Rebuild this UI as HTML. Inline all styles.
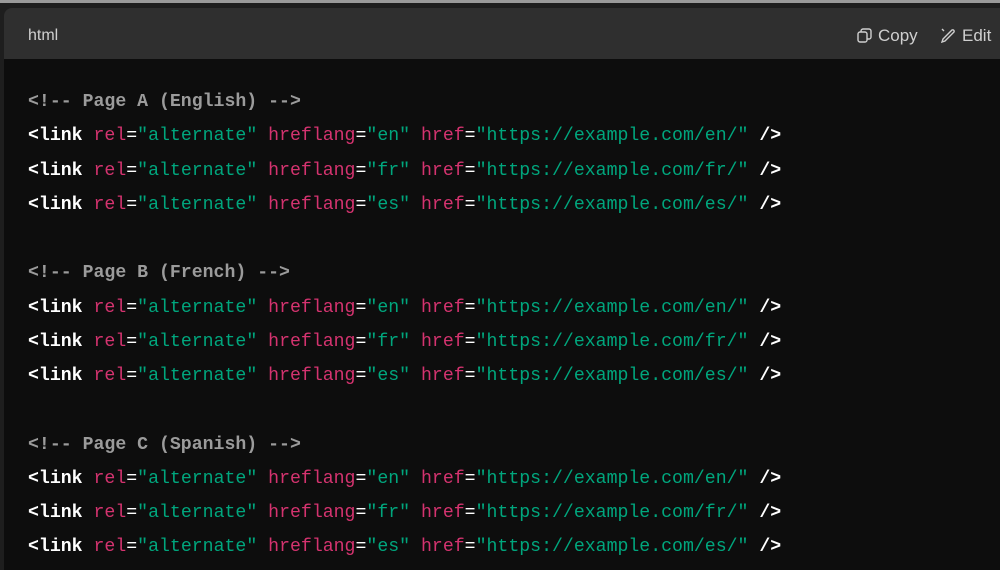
<!DOCTYPE html>
<html><head><meta charset="utf-8"><style>
html,body{margin:0;padding:0;width:1000px;height:570px;overflow:hidden;background:#1e1e1e;}
.top{position:absolute;left:0;top:0;width:1000px;height:3px;background:#9a9a9a;}
.hdr{position:absolute;left:4px;top:8px;width:996px;height:51px;background:#2f2f2f;border-radius:8px 0 0 0;}
.lang{position:absolute;left:24px;top:19px;font:16px "Liberation Sans",sans-serif;color:#cfcfcf;}
.btn{position:absolute;top:18px;font:17px "Liberation Sans",sans-serif;color:#cfcfcf;}
.code{position:absolute;left:4px;top:59px;width:996px;height:511px;background:#0d0d0d;}
pre{position:absolute;left:24px;top:26px;margin:0;font:18.2px/34.25px "Liberation Mono",monospace;color:#fff;}
.c{color:#9b9b9b;font-weight:bold}
.t{color:#fff;font-weight:bold}
.a{color:#d4336f}
.s{color:#00a67d}
</style></head><body>
<div class="top"></div>
<div class="hdr">
<div class="lang">html</div>
<div class="btn" style="left:853px"><svg width="15" height="15" viewBox="0 0 15 15" style="vertical-align:-2px;margin-right:6px" fill="none" stroke="#cfcfcf" stroke-width="1.4"><rect x="1" y="4" width="9" height="10" rx="2"/><path d="M4 4V3a2 2 0 0 1 2-2h6a2 2 0 0 1 2 2v6a2 2 0 0 1-2 2h-2"/></svg>Copy</div>
<div class="btn" style="left:937px"><svg width="16" height="15" viewBox="0 0 16 15" style="vertical-align:-2px;margin-right:5px" fill="none" stroke="#cfcfcf" stroke-width="1.4"><path d="M1 1l2 2M4 13l9-9a1.5 1.5 0 0 0-2-2l-9 9-1 3z"/></svg>Edit</div>
</div>
<div class="code"><pre><span class="c">&lt;!-- Page A (English) --&gt;</span>
<span class="t">&lt;link</span> <span class="a">rel</span>=<span class="s">"alternate"</span> <span class="a">hreflang</span>=<span class="s">"en"</span> <span class="a">href</span>=<span class="s">"https://example.com/en/"</span> <span class="t">/&gt;</span>
<span class="t">&lt;link</span> <span class="a">rel</span>=<span class="s">"alternate"</span> <span class="a">hreflang</span>=<span class="s">"fr"</span> <span class="a">href</span>=<span class="s">"https://example.com/fr/"</span> <span class="t">/&gt;</span>
<span class="t">&lt;link</span> <span class="a">rel</span>=<span class="s">"alternate"</span> <span class="a">hreflang</span>=<span class="s">"es"</span> <span class="a">href</span>=<span class="s">"https://example.com/es/"</span> <span class="t">/&gt;</span>

<span class="c">&lt;!-- Page B (French) --&gt;</span>
<span class="t">&lt;link</span> <span class="a">rel</span>=<span class="s">"alternate"</span> <span class="a">hreflang</span>=<span class="s">"en"</span> <span class="a">href</span>=<span class="s">"https://example.com/en/"</span> <span class="t">/&gt;</span>
<span class="t">&lt;link</span> <span class="a">rel</span>=<span class="s">"alternate"</span> <span class="a">hreflang</span>=<span class="s">"fr"</span> <span class="a">href</span>=<span class="s">"https://example.com/fr/"</span> <span class="t">/&gt;</span>
<span class="t">&lt;link</span> <span class="a">rel</span>=<span class="s">"alternate"</span> <span class="a">hreflang</span>=<span class="s">"es"</span> <span class="a">href</span>=<span class="s">"https://example.com/es/"</span> <span class="t">/&gt;</span>

<span class="c">&lt;!-- Page C (Spanish) --&gt;</span>
<span class="t">&lt;link</span> <span class="a">rel</span>=<span class="s">"alternate"</span> <span class="a">hreflang</span>=<span class="s">"en"</span> <span class="a">href</span>=<span class="s">"https://example.com/en/"</span> <span class="t">/&gt;</span>
<span class="t">&lt;link</span> <span class="a">rel</span>=<span class="s">"alternate"</span> <span class="a">hreflang</span>=<span class="s">"fr"</span> <span class="a">href</span>=<span class="s">"https://example.com/fr/"</span> <span class="t">/&gt;</span>
<span class="t">&lt;link</span> <span class="a">rel</span>=<span class="s">"alternate"</span> <span class="a">hreflang</span>=<span class="s">"es"</span> <span class="a">href</span>=<span class="s">"https://example.com/es/"</span> <span class="t">/&gt;</span></pre></div>
</body></html>
